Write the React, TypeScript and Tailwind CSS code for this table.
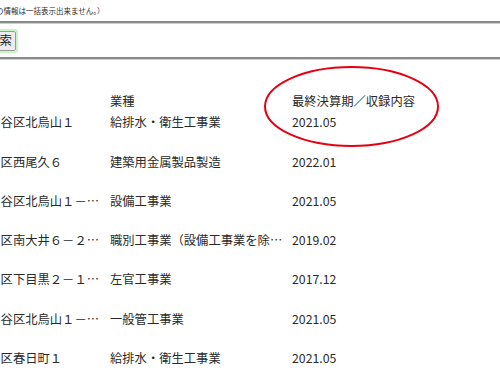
import React from "react"

type Row = { address: string; industry: string; period: string }

const rows: Row[] = [
  { address: "世田谷区北烏山１", industry: "給排水・衛生工事業", period: "2021.05" },
  { address: "荒川区西尾久６", industry: "建築用金属製品製造", period: "2022.01" },
  { address: "世田谷区北烏山１－２－３", industry: "設備工事業", period: "2021.05" },
  { address: "品川区南大井６－２５－１", industry: "職別工事業（設備工事業を除く）", period: "2019.02" },
  { address: "目黒区下目黒２－１９－８", industry: "左官工事業", period: "2017.12" },
  { address: "世田谷区北烏山１－４－２", industry: "一般管工事業", period: "2021.05" },
  { address: "練馬区春日町１", industry: "給排水・衛生工事業", period: "2021.05" },
]

function Rule() {
  return <div className="h-[3px] w-full border-t-2 border-b border-t-[#8a8a8a] border-b-[#cfcfcf]" />
}

export default function App() {
  return (
    <div className="relative w-[500px] h-[370px] overflow-hidden bg-white text-[#2a2a2a] font-['Noto_Sans_CJK_JP','Noto_Sans',sans-serif]">
      <div className="h-[21px] flex items-center whitespace-nowrap text-[7.5px] -ml-[4px]">
        の情報は一括表示出来ません。）
      </div>
      <Rule />
      <div className="h-[33px] flex items-center">
        <div className="-ml-[19px] rounded-[3px] border-2 border-[#c9f5c4]">
          <button className="h-[20px] px-[3px] flex items-center rounded-[2px] border border-[#9a9a9a] bg-[#ececec] text-[12.5px] leading-none text-[#222]">
            検索
          </button>
        </div>
      </div>
      <Rule />

      <div className="mt-[31px] -ml-[24px] text-[12.3px]">
        <div className="flex h-[21px] items-center">
          <div className="w-[126px]" />
          <div className="ml-[8px] w-[174px]">業種</div>
          <div className="ml-[8px]">最終決算期／収録内容</div>
        </div>
        {rows.map((row, i) => (
          <div key={"row-" + i} className="flex h-[39.3px] items-start">
            <div className="flex h-[21px] items-center">
              <div className="w-[126px] truncate">{row.address}</div>
              <div className="ml-[8px] w-[174px] truncate">{row.industry}</div>
              <div className="ml-[8px]">{row.period}</div>
            </div>
          </div>
        ))}
      </div>

      <svg className="absolute left-0 top-0 pointer-events-none" width="500" height="370">
        <ellipse cx="351.5" cy="106.5" rx="86.5" ry="39.5" fill="none" stroke="#e60012" strokeWidth="2" />
      </svg>
    </div>
  )
}
